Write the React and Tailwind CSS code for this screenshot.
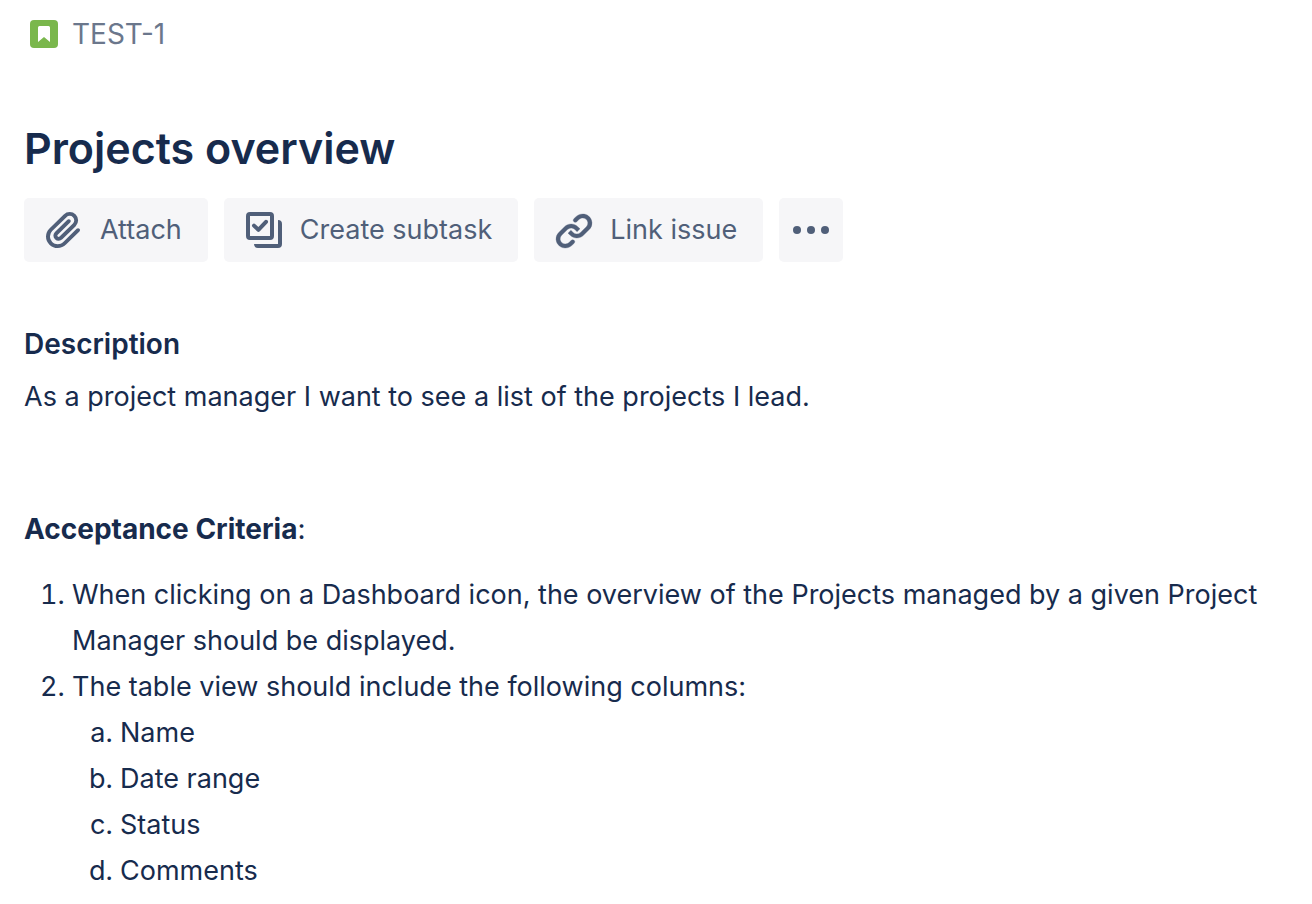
function BookmarkIcon() {
  return (
    <svg width="28" height="28" viewBox="0 0 28 28" aria-hidden="true">
      <rect width="28" height="28" rx="4" fill="#7ab74c" />
      <path d="M9.500 6h9A1.500 1.500 0 0 1 20 7.500V22l-6-5-6 5V7.500A1.500 1.500 0 0 1 9.500 6z" fill="#fff" />
    </svg>
  );
}

function AttachIcon() {
  return (
    <svg width="48" height="48" viewBox="0 0 24 24" aria-hidden="true">
      <path d="M11.643 17.965c-1.530 1.495-4.016 1.496-5.542.004a3.773 3.773 0 0 1 .002-5.412l7.147-6.985a2.316 2.316 0 0 1 3.220-.004c.893.873.895 2.282.004 3.153l-6.703 6.550a.653.653 0 0 1-.914-.008.620.620 0 0 1 0-.902l6.229-6.087a.941.941 0 0 0 0-1.353.995.995 0 0 0-1.384 0l-6.230 6.087a2.502 2.502 0 0 0 0 3.607 2.643 2.643 0 0 0 3.683.009l6.703-6.550a4.173 4.173 0 0 0-.003-5.860 4.300 4.300 0 0 0-5.989-.002l-7.147 6.986a5.655 5.655 0 0 0-.001 8.118c2.290 2.237 6.015 2.238 8.308-.004l6.691-6.539a.942.942 0 0 0 0-1.353.997.997 0 0 0-1.384 0l-6.690 6.545z" fill="currentColor" />
    </svg>
  );
}

function SubtaskIcon() {
  return (
    <svg width="48" height="48" viewBox="0 0 24 24" fill="none" stroke="currentColor" strokeWidth="2" strokeLinejoin="round" aria-hidden="true">
      <rect x="4" y="4" width="12" height="12" rx="1" />
      <path d="M7 9.800l2.200 2.100 3.800-4" strokeLinecap="round" />
      <path d="M19 7a2 2 0 0 1 2 2v10a2 2 0 0 1-2 2H9a2 2 0 0 1-2-2h12z" fill="currentColor" stroke="none" />
    </svg>
  );
}

function LinkIcon() {
  return (
    <svg width="48" height="48" viewBox="0 0 24 24" fill="currentColor" stroke="currentColor" strokeWidth="0.150" aria-hidden="true">
      <path d="M12.856 5.457l-.937.920a1.002 1.002 0 0 0 0 1.437 1.047 1.047 0 0 0 1.463 0l.984-.966c.967-.950 2.542-1.135 3.602-.288a2.540 2.540 0 0 1 .203 3.810l-2.903 2.852a2.646 2.646 0 0 1-3.696 0l-1.110-1.090L9 13.570l1.108 1.089c1.822 1.788 4.802 1.788 6.622 0l2.905-2.852a4.558 4.558 0 0 0-.357-6.820c-1.893-1.517-4.695-1.226-6.422.470" />
      <path d="M11.144 19.543l.937-.920a1.002 1.002 0 0 0 0-1.437 1.047 1.047 0 0 0-1.462 0l-.985.966c-.967.950-2.542 1.135-3.602.288a2.540 2.540 0 0 1-.203-3.810l2.903-2.852a2.646 2.646 0 0 1 3.696 0l1.110 1.090L15 11.430l-1.108-1.089c-1.822-1.788-4.802-1.788-6.622 0l-2.905 2.852a4.558 4.558 0 0 0 .357 6.820c1.893 1.517 4.695 1.226 6.422-.470" />
    </svg>
  );
}

function ActionButton({ icon, children }) {
  return (
    <button type="button" className="flex h-16 items-center gap-3 rounded-[5px] bg-[#f6f6f8] pr-[26px] pl-4 text-[27px] text-[#505f79]">
      {icon}
      {children}
    </button>
  );
}

export default function App() {
  return (
    <main className="px-6 pt-3 pb-2 font-['Inter','Liberation_Sans',sans-serif] text-[27px] leading-[46px] text-[#172b4d]">
      <nav aria-label="Issue" className="flex h-11 items-center gap-[14px] pl-[6px] text-[28px] text-[#6b778c]">
        <BookmarkIcon />
        <a href="#TEST-1">TEST-1</a>
      </nav>

      <h1 className="mt-16 text-[43px] leading-14 font-semibold">Projects overview</h1>

      <div className="mt-[22px] flex flex-wrap gap-4">
        <ActionButton icon={<AttachIcon />}>Attach</ActionButton>
        <ActionButton icon={<SubtaskIcon />}>Create subtask</ActionButton>
        <ActionButton icon={<LinkIcon />}>Link issue</ActionButton>
        <button type="button" aria-label="More actions" className="flex size-16 items-center justify-center rounded-[5px] bg-[#f6f6f8] text-[#505f79]">
          <svg width="48" height="48" viewBox="0 0 48 48" fill="currentColor" aria-hidden="true">
            <circle cx="10" cy="24" r="4" />
            <circle cx="24" cy="24" r="4" />
            <circle cx="38" cy="24" r="4" />
          </svg>
        </button>
      </div>

      <section className="mt-[59px]">
        <h2 className="text-[28px] font-semibold">Description</h2>
        <p className="mt-[7px]">As a project manager I want to see a list of the projects I lead.</p>
        <p className="mt-[86px] text-[28px]"><strong className="font-bold">Acceptance Criteria</strong>:</p>
        <ol className="mt-5 list-decimal pl-12">
          <li>When clicking on a Dashboard icon, the overview of the Projects managed by a given Project Manager should be displayed.</li>
          <li>
            The table view should include the following columns:
            <ol className="list-[lower-alpha] pl-12">
              <li>Name</li>
              <li>Date range</li>
              <li>Status</li>
              <li>Comments</li>
            </ol>
          </li>
        </ol>
      </section>
    </main>
  );
}
